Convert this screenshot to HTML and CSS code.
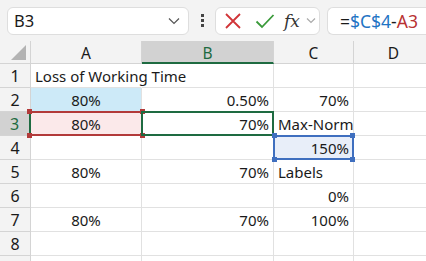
FILE: index.html
```html
<!DOCTYPE html>
<html lang="en">
<head>
  <meta charset="UTF-8">
  <title>Sheet</title>
  <link rel="stylesheet" href="styles.css">
</head>
<body>

  <!-- formula bar -->
  <div class="toolbar">
    <div class="namebox">
      <span>B3</span>
      <svg class="chev" width="12" height="8" viewBox="0 0 12 8"><path d="M1 1.5 L6 6.5 L11 1.5" fill="none" stroke="#555" stroke-width="1.2"/></svg>
    </div>
    <div class="dots"><i></i><i></i><i></i></div>
    <div class="buttons">
      <svg width="18" height="18" viewBox="0 0 18 18"><path d="M2 2 L16 16 M16 2 L2 16" stroke="#d13438" stroke-width="1.8"/></svg>
      <svg width="20" height="16" viewBox="0 0 20 16"><path d="M1.5 8.5 L7 14 L18.5 2" fill="none" stroke="#3a9a3a" stroke-width="1.8"/></svg>
      <span class="fx">fx</span>
      <svg class="chev" width="10" height="7" viewBox="0 0 10 7"><path d="M1 1.5 L5 5.5 L9 1.5" fill="none" stroke="#aaa" stroke-width="1.2"/></svg>
    </div>
    <div class="formula">=<span class="ref-blue">$C$4</span>-<span class="ref-red">A3</span></div>
  </div>

  <!-- worksheet -->
  <div class="sheet">
    <div class="corner"><span></span></div>
    <div class="colhead">A</div>
    <div class="colhead active">B</div>
    <div class="colhead">C</div>
    <div class="colhead">D</div>

    <div class="rowhead">1</div>
    <div class="cell overflow">Loss of Working Time</div>
    <div class="cell"></div>
    <div class="cell"></div>
    <div class="cell"></div>

    <div class="rowhead">2</div>
    <div class="cell center fill-blue">80%</div>
    <div class="cell right">0.50%</div>
    <div class="cell right">70%</div>
    <div class="cell"></div>

    <div class="rowhead active">3</div>
    <div class="cell center fill-pink">80%<div class="ring ring-red"><b class="tl"></b><b class="tr"></b><b class="bl"></b><b class="br"></b></div></div>
    <div class="cell right">70%<div class="ring ring-green"></div></div>
    <div class="cell">Max-Norm</div>
    <div class="cell"></div>

    <div class="rowhead">4</div>
    <div class="cell"></div>
    <div class="cell"></div>
    <div class="cell right fill-lblue">150%<div class="ring ring-blue"><b class="tl"></b><b class="tr"></b><b class="bl"></b><b class="br"></b></div></div>
    <div class="cell"></div>

    <div class="rowhead">5</div>
    <div class="cell center">80%</div>
    <div class="cell right">70%</div>
    <div class="cell">Labels</div>
    <div class="cell"></div>

    <div class="rowhead">6</div>
    <div class="cell"></div>
    <div class="cell"></div>
    <div class="cell right">0%</div>
    <div class="cell"></div>

    <div class="rowhead">7</div>
    <div class="cell center">80%</div>
    <div class="cell right">70%</div>
    <div class="cell right">100%</div>
    <div class="cell"></div>

    <div class="rowhead">8</div>
    <div class="cell"></div>
    <div class="cell"></div>
    <div class="cell"></div>
    <div class="cell"></div>

    <div class="rowhead last"></div>
    <div class="cell last"></div>
    <div class="cell last"></div>
    <div class="cell last"></div>
    <div class="cell last"></div>
  </div>

</body>
</html>
```

FILE: styles.css
```css
:root {
  --bar: #f3f3f3;
  --line: #e1e1e1;
  --head: #f3f3f3;
  --head-line: #d4d4d4;
  --green: #1e6b41;
  --red: #b23a3a;
  --blue: #3f6fbf;
  --text: #1a1a1a;
}

* {
  box-sizing: border-box;
  margin: 0;
  padding: 0;
}

body {
  font-family: "Noto Sans", "Open Sans", sans-serif;
  color: var(--text);
  background: #fff;
  width: 426px;
  height: 261px;
  overflow: hidden;
}

/* formula bar */
.toolbar {
  display: flex;
  align-items: center;
  height: 41px;
  padding: 0 0 0 7px;
  background: var(--bar);
}

.namebox {
  display: flex;
  align-items: center;
  justify-content: space-between;
  width: 182px;
  height: 28px;
  padding: 0 8px 0 6px;
  background: #fff;
  border: 1px solid #dedede;
  border-radius: 6px;
  font-size: 16.5px;
}

.dots {
  display: flex;
  flex-direction: column;
  gap: 2px;
  margin: 0 11px 0 12px;
}

.dots i {
  display: block;
  width: 3px;
  height: 3px;
  background: #444;
}

.buttons {
  display: flex;
  align-items: center;
  width: 105px;
  height: 28px;
  padding: 0 0 0 8px;
  background: #fff;
  border: 1px solid #dedede;
  border-radius: 6px;
}

.buttons svg:nth-child(2) {
  margin-left: 13px;
}

.fx {
  font-family: "DejaVu Serif", "Liberation Serif", serif;
  font-style: italic;
  font-size: 17px;
  margin-left: 9px;
  color: #333;
}

.buttons .chev {
  margin-left: 6px;
}

.formula {
  flex: 1;
  height: 28px;
  margin-left: 7px;
  padding: 1px 0 0 12px;
  background: #fff;
  border: 1px solid #dedede;
  border-right: none;
  border-radius: 6px 0 0 6px;
  font-size: 17.5px;
}

.ref-blue { color: #1f74c4; }
.ref-red { color: #b83232; }

/* worksheet */
.sheet {
  display: grid;
  grid-template-columns: 31px 111px 132px 80px 80px;
  grid-template-rows: 23px repeat(8, 24px) 5px;
  font-size: 15px;
}

.corner {
  position: relative;
  background: var(--head);
  border-right: 1px solid var(--head-line);
  border-bottom: 1px solid var(--head-line);
}

.corner span {
  position: absolute;
  right: 4px;
  bottom: 3px;
  width: 0;
  height: 0;
  border-left: 15px solid transparent;
  border-bottom: 15px solid #b3b3b3;
}

.colhead {
  display: flex;
  align-items: center;
  justify-content: center;
  background: var(--head);
  border-right: 1px solid var(--head-line);
  border-bottom: 1px solid var(--head-line);
  padding-top: 2px;
  font-size: 15.5px;
}

.colhead.active {
  background: #d2d2d2;
  color: var(--green);
  border-bottom: 2px solid var(--green);
}

.rowhead {
  display: flex;
  align-items: center;
  justify-content: center;
  background: var(--head);
  border-right: 1px solid var(--head-line);
  border-bottom: 1px solid var(--head-line);
  font-size: 16px;
}

.rowhead.active {
  background: #d2d2d2;
  color: var(--green);
  border-right: 2px solid var(--green);
}

.cell {
  position: relative;
  display: flex;
  align-items: center;
  padding: 0 4px;
  border-right: 1px solid var(--line);
  border-bottom: 1px solid var(--line);
  white-space: nowrap;
}

.rowhead.last,
.cell.last {
  border-bottom: none;
}

.cell.overflow {
  overflow: visible;
  border-right-color: transparent;
  z-index: 1;
}

.cell.center { justify-content: center; }
.cell.right { justify-content: flex-end; }

.fill-blue { background: #cdeaf8; }
.fill-pink { background: #fbe9ea; }
.fill-lblue { background: #e8eef9; }

/* selection rings sit over the cell edges */
.ring {
  position: absolute;
  left: -1px;
  top: -1px;
  right: -1px;
  bottom: -1px;
  z-index: 2;
}

.ring-red {
  border-top: 2px solid var(--red);
  border-bottom: 2px solid var(--red);
}

.ring-green {
  border: 2px solid var(--green);
}

.ring-blue {
  border: 2px solid var(--blue);
}

.ring b {
  position: absolute;
  width: 5px;
  height: 5px;
}

.ring-red b { background: var(--red); }
.ring-blue b { background: var(--blue); }

.ring .tl { left: -3px; top: -4px; }
.ring .tr { right: -3px; top: -4px; }
.ring .bl { left: -3px; bottom: -4px; }
.ring .br { right: -3px; bottom: -4px; }
```
